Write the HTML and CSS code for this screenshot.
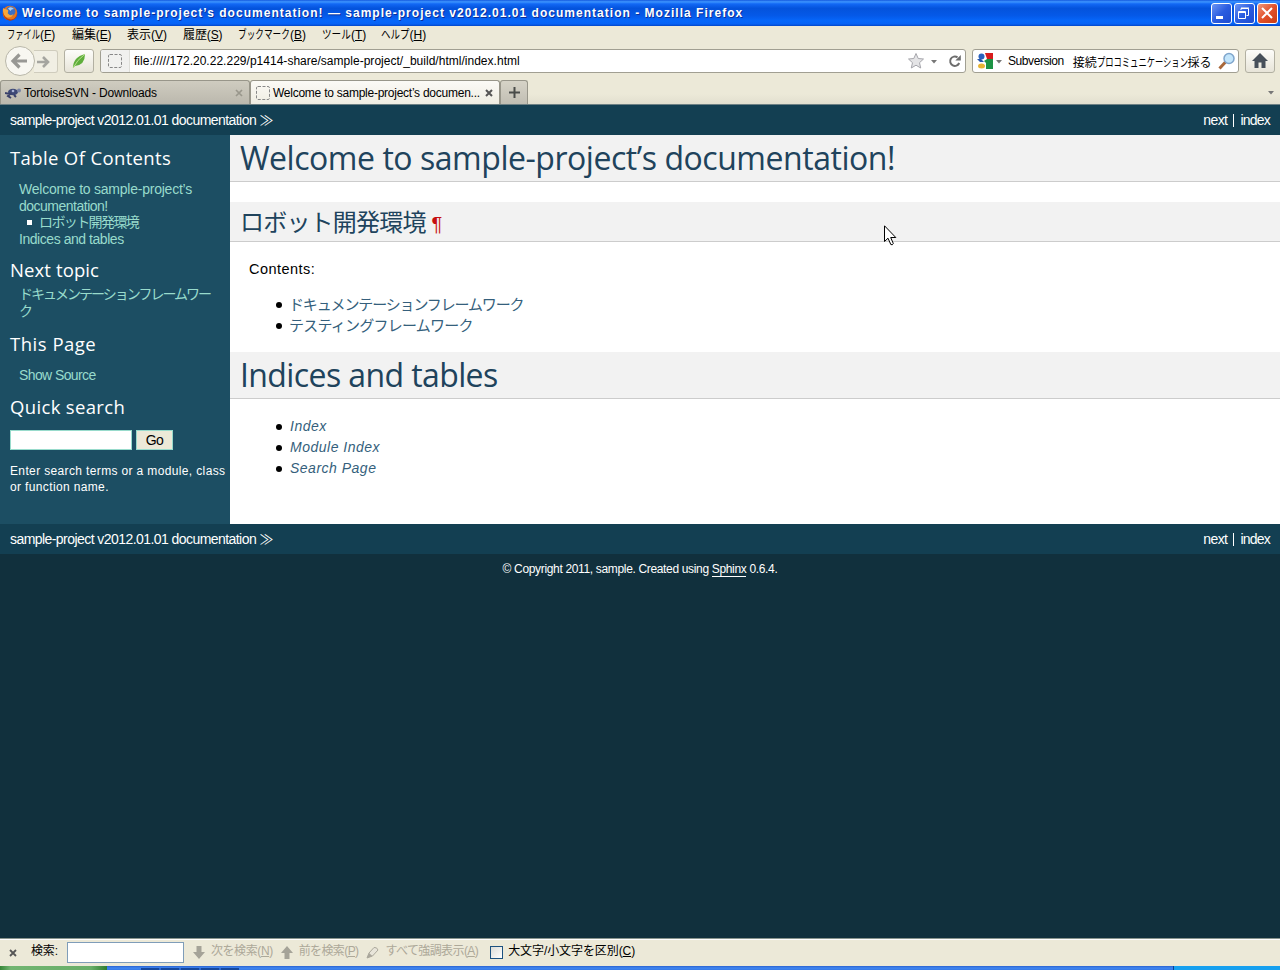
FILE: index.html
```html
<!DOCTYPE html>
<html lang="ja">
<head>
<meta charset="utf-8">
<title>Welcome to sample-project’s documentation!</title>
<link rel="stylesheet" href="styles.css">
</head>
<body>
<div class="window">
  <header class="titlebar">
    <svg class="fox" width="16" height="16" viewBox="0 0 16 16"><circle cx="8" cy="8" r="7.3" fill="#e8761a"/><circle cx="8.6" cy="6.4" r="4.8" fill="#3c6fc4"/><path d="M6 3.5Q9 1 12 4Q9 4 8.5 6Z" fill="#a9d0f5"/><path d="M1 3Q2.5 4 5 4.5Q7 5 6 7Q5 8 7 9.5Q9 11 11.5 9Q9 14 4 12Q0 9 1 3Z" fill="#f9a73a"/><path d="M1 6Q2 14 9 14.5Q14 14 15 8Q15.500 15 8 15.700Q1 15 1 6Z" fill="#b8390e"/></svg>
    <span class="title-text">Welcome to sample-project’s documentation! — sample-project v2012.01.01 documentation - Mozilla Firefox</span>
    <div class="win-buttons">
      <span class="wb"><svg width="21" height="21"><rect x="5" y="13" width="7" height="3" fill="#fff"/></svg></span>
      <span class="wb"><svg width="21" height="21" fill="none" stroke="#fff"><path d="M7 7V5.500H14.500V12.500H12.500M7 5H15" /><path d="M4.500 8.500H11.500V15.500H4.500ZM4 9.500H12"/></svg></span>
      <span class="wb close"><svg width="21" height="21" stroke="#fff" stroke-width="2"><path d="M5 5L15 15M15 5L5 15"/></svg></span>
    </div>
  </header>
  <nav class="menubar">
    <span class="m1"><span class="kana">ファイル</span>(<u>F</u>)</span>
    <span class="m2">編集(<u>E</u>)</span>
    <span class="m3">表示(<u>V</u>)</span>
    <span class="m4">履歴(<u>S</u>)</span>
    <span class="m5"><span class="kana">ブックマーク</span>(<u>B</u>)</span>
    <span class="m6"><span class="kana">ツール</span>(<u>T</u>)</span>
    <span class="m7"><span class="kana">ヘルプ</span>(<u>H</u>)</span>
  </nav>
  <div class="toolbar">
    <div class="history">
      <span class="back"><svg width="30" height="30"><path d="M7.500 15H22M14.500 8.500L8 15L14.500 21.500" fill="none" stroke="#989894" stroke-width="3.200"/></svg></span>
      <span class="forward"><svg width="22" height="22"><path d="M3 11H14M9 6L14 11L9 16" fill="none" stroke="#a5a5a0" stroke-width="2.600"/></svg></span>
    </div>
    <span class="tool leaf"><svg width="28" height="22"><path d="M8 18Q8 7 20 4Q20 15 10 16Z" fill="#5fae3c"/><path d="M8 18Q12 10 20 4" fill="none" stroke="#b9e08b"/></svg></span>
    <div class="urlbar">
      <span class="identity"><svg width="14" height="14"><rect x=".5" y=".5" width="13" height="13" rx="1.500" fill="none" stroke="#888" stroke-dasharray="3 1.500"/></svg></span>
      <span class="url">file://///172.20.22.229/p1414-share/sample-project/_build/html/index.html</span>
      <span class="url-icons">
        <svg width="18" height="18"><path d="M9 1.500L11.200 6.500L16.500 7L12.500 10.700L13.700 16L9 13.200L4.300 16L5.500 10.700L1.500 7L6.800 6.500Z" fill="#e4e4e6" stroke="#a6a6ac"/></svg>
        <svg class="caret" width="6" height="4"><path d="M0 0H6L3 3.500Z" fill="#777"/></svg>
        <svg width="14" height="14"><path d="M9.500 3.300A4.700 4.700 0 1 0 11.200 9" fill="none" stroke="#6d6d6d" stroke-width="2"/><path d="M12.800 1V6.500H7.300Z" fill="#6d6d6d"/></svg>
      </span>
    </div>
    <div class="searchbar">
      <svg width="16" height="16"><rect width="16" height="16" fill="#fff"/><path d="M8 0H16V6H10Z" fill="#d71c1c"/><path d="M10 6H16V16H9V10L7 8Z" fill="#1c9345"/><circle cx="4.500" cy="3.500" r="3" fill="#2b62bd"/><path d="M0 6H4L7 9H3Z" fill="#2456ad"/><ellipse cx="4.500" cy="13" rx="3.500" ry="2.500" fill="#e7b434"/></svg>
      <svg class="scaret" width="6" height="4"><path d="M0 0H6L3 3.500Z" fill="#777"/></svg>
      <span class="q1">Subversion</span><span class="q2">接続<span class="kana">プロコミュニケーション</span>採る</span>
      <svg class="glass" width="18" height="18"><path d="M1.500 16.500L7.500 10" stroke="#a9683a" stroke-width="3"/><circle cx="11" cy="6.500" r="5" fill="#c3e5fb" stroke="#7fa5cc" stroke-width="1.500"/></svg>
    </div>
    <span class="tool home"><svg width="28" height="22"><path d="M14 3L22 11H19.500V18H15.500V12.500H12.500V18H8.500V11H6Z" fill="#47505a"/></svg></span>
  </div>
  <div class="tabs">
    <div class="tab idle">
      <svg width="17" height="12"><ellipse cx="8" cy="5" rx="5" ry="3.200" fill="#3d4876"/><path d="M0 6L5 7L3 9L6 11M9 8L11 10" stroke="#39406a" stroke-width="2" fill="none"/><circle cx="14" cy="3.500" r="2" fill="#7983a2"/><circle cx="8" cy="4" r="1.300" fill="#a9b3d5"/></svg>
      <span class="t1">TortoiseSVN - Downloads</span>
      <svg class="x" width="8" height="8" stroke="#99978c" stroke-width="1.700"><path d="M1 1L7 7M7 1L1 7"/></svg>
    </div>
    <div class="tab active">
      <svg width="14" height="14"><rect x=".5" y=".5" width="13" height="13" rx="1.500" fill="none" stroke="#888" stroke-dasharray="3 1.500"/></svg>
      <span class="t2">Welcome to sample-project’s documen...</span>
      <svg class="x" width="8" height="8" stroke="#555" stroke-width="2"><path d="M1 1L7 7M7 1L1 7"/></svg>
    </div>
    <div class="tab new"><svg width="11" height="11"><path d="M5.500 0V11M0 5.500H11" stroke="#4a4d4a" stroke-width="2"/></svg></div>
    <svg class="tabcaret" width="6" height="4"><path d="M0 0H6L3 3.500Z" fill="#777"/></svg>
  </div>

  <div class="related"><span class="r1">sample-project v2012.01.01 documentation ≫</span><span class="r2"><span class="nx">next</span><i></i><span class="ix">index</span></span></div>
  <div class="document">
    <aside class="sidebar">
      <h3><span class="h31">Table Of Contents</span></h3>
      <div class="toc">
        <div><a class="s1">Welcome to sample-project’s</a></div>
        <div><a class="s2">documentation!</a></div>
        <div class="sub"><a class="s3">ロボット開発環境</a></div>
        <div><a class="s4">Indices and tables</a></div>
      </div>
      <h3 class="next"><span class="h32">Next topic</span></h3>
      <div class="topic"><div><a class="s5">ドキュメンテーションフレームワー</a></div><div><a>ク</a></div></div>
      <h3 class="this"><span class="h33">This Page</span></h3>
      <div class="source"><a class="s6">Show Source</a></div>
      <h3 class="quick"><span class="h34">Quick search</span></h3>
      <div class="searchform"><input type="text" aria-label="search"><button>Go</button></div>
      <p class="hint"><span class="p1">Enter search terms or a module, class</span><br><span class="p2">or function name.</span></p>
    </aside>
    <main class="body">
      <h1><span class="b1">Welcome to sample-project’s documentation!</span></h1>
      <h2><span class="b2">ロボット開発環境</span><a class="pilcrow">¶</a></h2>
      <p class="contents"><span class="b3">Contents:</span></p>
      <ul>
        <li><a class="b4">ドキュメンテーションフレームワーク</a></li>
        <li><a class="b5">テスティングフレームワーク</a></li>
      </ul>
      <h1><span class="b6">Indices and tables</span></h1>
      <ul class="em">
        <li><a class="b7">Index</a></li>
        <li><a class="b8">Module Index</a></li>
        <li><a class="b9">Search Page</a></li>
      </ul>
    </main>
  </div>
  <div class="related"><span class="r1">sample-project v2012.01.01 documentation ≫</span><span class="r2"><span class="nx">next</span><i></i><span class="ix">index</span></span></div>
  <footer class="footer"><span class="f1">© Copyright 2011, sample. Created using <a>Sphinx</a> 0.6.4.</span></footer>
  <div class="findbar">
    <svg class="x" width="8" height="8" stroke="#555" stroke-width="1.800"><path d="M1 1L7 7M7 1L1 7"/></svg>
    <span class="k1">検索:</span>
    <input type="text" aria-label="検索">
    <svg class="dn" width="12" height="13"><path d="M3.500 0H8.500V6H12L6 13L0 6H3.500Z" fill="#a5a398"/></svg>
    <span class="k2 off">次を検索(<u>N</u>)</span>
    <svg class="up" width="12" height="13"><path d="M3.500 13H8.500V7H12L6 0L0 7H3.500Z" fill="#a5a398"/></svg>
    <span class="k3 off">前を検索(<u>P</u>)</span>
    <svg class="pen" width="13" height="13"><path d="M1 12L3 7L8 1.500Q11 1 12 4L6.500 10Z" fill="#e8e5da" stroke="#aaa79b"/><path d="M1 12L3 7L6.500 10Z" fill="#aaa79b"/></svg>
    <span class="k4 off">すべて強調表示(<u>A</u>)</span>
    <span class="check"></span>
    <span class="k5">大文字/小文字を区別(<u>C</u>)</span>
  </div>
  <div class="taskbar"><span class="start"></span><span class="quicklaunch"></span><span class="tray"></span></div>
  <svg class="pointer" width="13" height="21" viewBox="0 0 13 21"><path d="M.5 .8V16.500L4 13.200L6.800 19.500Q8.500 20.500 9.300 18.500L6.700 12.500H11.800Z" fill="#fff" stroke="#000"/></svg>
</div>
</body>
</html>
```
FILE: styles.css
```css
* { box-sizing: border-box; }
body { margin: 0; font: 12px "Liberation Sans", "Noto Sans CJK JP", sans-serif; color: #000; }
.window { position: relative; width: 1280px; height: 970px; overflow: hidden; display: flex; flex-direction: column; background: #11303d; white-space: nowrap; }
svg { display: block; flex: none; }
span, a { flex: none; }
u { text-underline-offset: 1px; }

.titlebar { height: 26px; display: flex; align-items: center; padding: 0 2px; color: #fff; font-weight: bold; font-size: 12px; text-shadow: 1px 1px #0a2f9a; background: linear-gradient(#1459de 0, #3d95ff 7%, #1268f5 15%, #0453dc 32%, #0559e8 60%, #0667fb 80%, #0762f5 92%, #0346c8 100%); }
.title-text { margin-left: 4px; letter-spacing: 1.02px; }
.win-buttons { display: flex; gap: 2px; margin-left: auto; }
.wb { width: 21px; height: 21px; border: 1px solid #fff; border-radius: 3px; background: linear-gradient(135deg, #6d95f4, #2a5ce0 50%, #1e4bd0); }
.wb svg { margin: -1px; }
.wb.close { background: linear-gradient(135deg, #f0987c, #e2512a 50%, #c93c14); }

/* Narrow katakana, as in a UI font with proportional kana */
.kana { display: inline-block; transform: scaleX(.69); transform-origin: left; }
.menubar { height: 20px; display: flex; line-height: 18px; padding-left: 7px; background: #ece9d8; }
.m1 { width: 65px; }
.m2 { width: 55px; }
.m3 { width: 56px; }
.m4 { width: 55px; }
.m5 { width: 84px; }
.m6 { width: 59px; }
.m2, .m4 { letter-spacing: -.1px; }
.m1 .kana { margin-right: -15px; }
.m5 .kana { transform: scaleX(.72); margin-right: -20px; }
.m6 .kana { transform: scaleX(.8); margin-right: -7px; }
.m7 .kana { transform: scaleX(.79); margin-right: -7.500px; }

.toolbar { height: 33px; display: flex; align-items: flex-start; padding: 3px 5px 0; background: #ece9d8; }
.history { display: flex; width: 59px; height: 24px; align-items: center; }
.back { width: 30px; height: 30px; border: 1px solid #b9b7a9; border-radius: 50%; background: #f8f7f1; z-index: 1; }
.back svg { margin: -1px; }
.forward { width: 24px; height: 23px; margin-left: -1px; border: 1px solid #cfccbd; border-left: 0; border-radius: 0 3px 3px 0; background: #f1efe4; }
.tool { width: 30px; height: 24px; border: 1px solid #b2b0a2; border-radius: 3px; background: linear-gradient(#fdfdfa, #e7e4d8); }
.urlbar { width: 866px; height: 24px; margin-left: 6px; display: flex; align-items: center; background: #fff; border: 1px solid #a19f92; border-radius: 3px; overflow: hidden; }
.identity { width: 29px; height: 22px; padding: 4px 0 0 7px; background: #f1f1ef; border-right: 1px solid #deded9; }
.url { margin-left: 4px; letter-spacing: .02px; }
.url-icons { display: flex; align-items: center; margin-left: auto; padding-right: 3px; }
.caret { margin: 1px 11px 0 6px; }
.searchbar { width: 267px; height: 24px; margin-left: 6px; display: flex; align-items: center; padding: 0 2px 0 4px; background: #fff; border: 1px solid #a19f92; border-radius: 3px; }
.scaret { margin: 1px 6px 0 3px; }
.q1 { letter-spacing: -.43px; }
.q2 { margin-left: 9px; }
.q2 .kana { margin-right: -41px; }
.glass { margin-left: auto; }
.home { margin-left: 6px; }

.tabs { height: 26px; display: flex; align-items: flex-end; padding-top: 1px; background: linear-gradient(#ece9d8 60%, #e2dfcf); border-bottom: 1px solid #6d8084; }
.tab { height: 24px; display: flex; align-items: center; border: 1px solid #98968a; border-bottom: 0; border-radius: 3px 3px 0 0; }
.tab .x { margin-left: auto; }
.idle { width: 250px; padding: 0 6px 0 4px; background: linear-gradient(#cfccc0, #bbb8ad); }
.t1 { margin-left: 2px; letter-spacing: -.17px; }
.active { width: 250px; padding: 0 6px 0 5px; background: linear-gradient(#fbfaf6, #efede2); }
.t2 { margin-left: 3px; letter-spacing: -.25px; }
.new { width: 28px; justify-content: center; background: linear-gradient(#d6d3c7, #c1beb3); }
.tabcaret { margin: 0 6px 9px auto; }

.related { height: 30px; flex: none; display: flex; justify-content: space-between; padding: 0 10px; line-height: 30px; background: #133f52; color: #fff; font-size: 14px; }
.r1 { letter-spacing: -.56px; }
.r2 { display: flex; align-items: center; }
.r2 i { width: 1px; height: 13px; margin: 0 6px 0 6px; background: #fff; }
.nx { letter-spacing: -.6px; }
.ix { letter-spacing: -.77px; }

.document { height: 389px; flex: none; display: grid; grid-template-columns: 230px 1fr; }
.sidebar { background: #1c4e63; padding: 10px 0 0 10px; color: #fff; font-size: 14px; }
h1, h2, h3, p, ul { margin: 0; padding: 0; font-weight: normal; }
h3 { height: 26px; font: 500 18.500px/26px "Open Sans", sans-serif; }
.h31 { letter-spacing: .37px; }
.h32 { letter-spacing: .11px; }
.h33 { letter-spacing: .51px; }
.h34 { letter-spacing: .34px; }
.sidebar a { color: #98dbcc; }
.s1 { letter-spacing: -.23px; }
.s2 { letter-spacing: -.5px; }
.s3 { letter-spacing: -1.6px; }
.s4 { letter-spacing: -.45px; }
.s5 { letter-spacing: -1.99px; }
.s6 { letter-spacing: -.6px; }
.toc, .topic, .source { padding-left: 9px; line-height: 16.700px; }
.toc > div, .topic > div, .source { height: 16.700px; }
.toc { margin-top: 10px; height: 67px; }
.sub { display: flex; align-items: center; padding-left: 8px; }
.sub::before { content: ""; width: 5px; height: 5px; margin-right: 7px; background: #fff; }
.next { margin-top: 9px; }
.topic { margin-top: 3px; height: 34px; }
.this { margin-top: 11px; }
.source { margin-top: 10px; }
.quick { margin-top: 10px; }
.searchform { display: flex; gap: 4px; margin-top: 10.300px; height: 20px; }
.searchform input { width: 122px; height: 20px; border: 1px solid #98dbcc; background: #fff; padding: 0; }
.searchform button { width: 37px; height: 20px; border: 1px solid #98dbcc; background: #ece9d8; color: #000; padding: 0; font: 14px/18px "Liberation Sans", sans-serif; letter-spacing: -.7px; }
.hint { margin-top: 13px; font-size: 12px; line-height: 16px; letter-spacing: .36px; }

.body { background: #fff; }
h1, h2 { background: #f2f2f2; border-bottom: 1px solid #ccc; color: #20435c; padding-left: 10px; }
h1 { height: 47px; font: 32px/46px "Open Sans", sans-serif; }
.b1 { letter-spacing: -.46px; }
.b6 { letter-spacing: -.6px; }
h2 { height: 40px; margin-top: 20px; display: flex; font: 400 24px/37px "Noto Sans CJK JP", sans-serif; }
.b2 { letter-spacing: -.8px; }
.pilcrow { color: #c60f0f; font: 20px/44px "Liberation Sans", sans-serif; margin-left: 6px; }
.contents { margin: 17px 0 15px 19px; line-height: 20px; font-size: 14.500px; letter-spacing: .46px; }
.body ul { list-style: none; padding-left: 46px; }
.body li { display: flex; align-items: center; height: 21px; line-height: 21px; font-size: 15px; }
.body li a { color: #355f7c; }
.body li::before { content: ""; width: 6px; height: 6px; margin-right: 7px; border-radius: 50%; background: #000; }
.b4 { letter-spacing: -1.14px; }
.b5 { letter-spacing: -.77px; }
.contents + ul { height: 58px; }
.body .em { margin-top: 17px; }
.body .em a { font-style: italic; font-size: 14px; margin-left: 1px; letter-spacing: .5px; }

.footer { flex: 1; text-align: center; line-height: 30px; color: #fff; letter-spacing: -.34px; }
.footer a { border-bottom: 1px solid #fff; }

.findbar { height: 28px; display: flex; align-items: center; padding-left: 9px; line-height: 18px; background: #ece9d8; border-top: 1px solid #8a958f; box-shadow: inset 0 1px #fff; }
.findbar > span:not(.check) { margin-top: -3px; }
.k1 { margin-left: 14px; letter-spacing: -.14px; }
.findbar input { width: 117px; height: 21px; margin-left: 9px; border: 1px solid #7f9db9; background: #fff; padding: 0; }
.off { color: #aca899; }
.k2 { letter-spacing: -.41px; }
.k3 { letter-spacing: -.62px; }
.k4 { letter-spacing: -.6px; }
.k5 { letter-spacing: -.08px; }
.dn { margin: 0 6px 0 9px; }
.up { margin: 0 6px 0 8px; }
.pen { margin: 0 6px 0 8px; }
.check { width: 13px; height: 13px; margin: 0 5px 0 12px; border: 1px solid #1c5180; background: linear-gradient(135deg, #dcdcd7, #fff); }
.taskbar { height: 4px; display: flex; background: linear-gradient(#2a62cf, #3f86f0 50%, #3678e6); }
.start { width: 107px; background: linear-gradient(90deg, #388638, #72b572 10%, #68ae68 85%, #2f7d2f); }
.quicklaunch { width: 98px; height: 2px; margin: 2px 0 0 34px; background: repeating-linear-gradient(90deg, #15479c 0 18px, #2d68cf 18px 20px); }
.tray { width: 107px; margin-left: auto; border-left: 1px solid #0f3f93; background: #16a0ef; }
.pointer { position: absolute; left: 884px; top: 225px; }
```
